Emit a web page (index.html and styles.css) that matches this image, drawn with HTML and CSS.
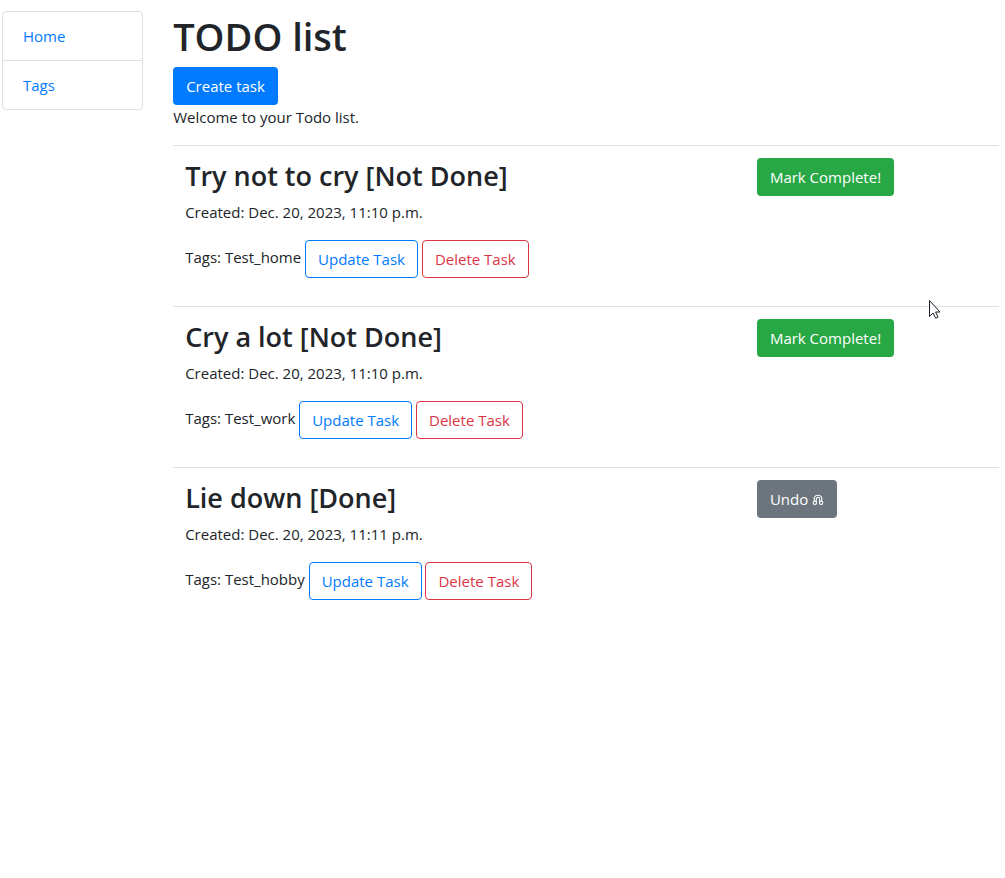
FILE: index.html
```html
<!DOCTYPE html>
<html lang="en">
<head>
<meta charset="utf-8">
<meta name="viewport" content="width=device-width, initial-scale=1">
<title>TODO list</title>
<link rel="stylesheet" href="styles.css">
</head>
<body>
<div class="layout">
  <nav class="sidebar">
    <a class="sidebar-link" href="#">Home</a>
    <a class="sidebar-link" href="#">Tags</a>
  </nav>
  <main class="content">
    <h1 class="title">TODO list</h1>
    <button class="btn btn-primary" type="button">Create task</button>
    <p class="welcome">Welcome to your Todo list.</p>
    <section class="task">
      <div class="task-info">
        <h2 class="task-title">Try not to cry [Not Done]</h2>
        <p class="task-line">Created: Dec. 20, 2023, 11:10 p.m.</p>
        <p class="task-line">Tags: Test_home <button class="btn btn-outline-primary" type="button">Update Task</button> <button class="btn btn-outline-danger" type="button">Delete Task</button></p>
      </div>
      <div class="task-status"><button class="btn btn-success" type="button">Mark Complete!</button></div>
    </section>
    <section class="task">
      <div class="task-info">
        <h2 class="task-title">Cry a lot [Not Done]</h2>
        <p class="task-line">Created: Dec. 20, 2023, 11:10 p.m.</p>
        <p class="task-line">Tags: Test_work <button class="btn btn-outline-primary" type="button">Update Task</button> <button class="btn btn-outline-danger" type="button">Delete Task</button></p>
      </div>
      <div class="task-status">
        <button class="btn btn-success" type="button">Mark Complete!</button>
        <svg class="pointer" width="13" height="20" viewBox="0 0 13 20" aria-hidden="true"><path d="M.5 .5v16l3.5-3.5 2.6 5.2 2.4-1.1-2.4-5.1h4.4z" fill="#fff" stroke="#1c1c28" stroke-width="1"/></svg>
      </div>
    </section>
    <section class="task">
      <div class="task-info">
        <h2 class="task-title">Lie down [Done]</h2>
        <p class="task-line">Created: Dec. 20, 2023, 11:11 p.m.</p>
        <p class="task-line">Tags: Test_hobby <button class="btn btn-outline-primary" type="button">Update Task</button> <button class="btn btn-outline-danger" type="button">Delete Task</button></p>
      </div>
      <div class="task-status"><button class="btn btn-secondary" type="button">Undo <svg class="undo-icon" width="12" height="12" viewBox="0 0 12 12" aria-hidden="true"><g fill="none" stroke="currentColor" stroke-width="1.1"><path d="M2.6 6.8C1.2 4 2.6 1.2 6 1.2S10.800 4 9.400 6.800M4.300 7.500V5.200C4.300 4 5 3.300 6 3.300S7.700 4 7.700 5.200V7.500"/><circle cx="2.900" cy="8.800" r="1.700"/><circle cx="9.100" cy="8.800" r="1.700"/></g></svg></button></div>
    </section>
  </main>
</div>
</body>
</html>
```
FILE: styles.css
```css
* { box-sizing: border-box; }

body {
  margin: 0;
  background: #fff;
  color: #212529;
  font: 400 15px/24px "Open Sans", "Noto Sans", sans-serif;
}

.layout {
  display: grid;
  grid-template-columns: minmax(0, 1fr) minmax(0, 5fr);
  padding: 11px 6px 0 2px;
}

.sidebar {
  align-self: start;
  margin-right: 25px;
  border: 1px solid #dfdfdf;
  border-radius: 4px;
}

.sidebar-link {
  display: block;
  padding: 12px 20px;
  color: #007bff;
  text-decoration: none;
}

.sidebar-link + .sidebar-link { border-top: 1px solid #dfdfdf; }

.content { padding-left: 5px; }

.title {
  margin: 0 0 6px;
  font-size: 38px;
  font-weight: 600;
  line-height: 50px;
}

.btn {
  height: 38px;
  padding: 0 12px;
  border: 1px solid transparent;
  border-radius: 4px;
  font: inherit;
  vertical-align: middle;
  cursor: pointer;
}

.btn-primary { background: #007bff; color: #fff; }
.btn-success { background: #28a745; color: #fff; }
.btn-secondary { background: #6c757d; color: #fff; }
.btn-outline-primary { background: #fff; border-color: #007bff; color: #007bff; }
.btn-outline-danger { background: #fff; border-color: #dc3545; color: #dc3545; }

.welcome { margin: 0 0 16px; }

.task {
  display: grid;
  grid-template-columns: minmax(0, 9fr) minmax(0, 4fr);
  border-top: 1px solid #dee2e6;
}

.task-info,
.task-status { padding: 12px; }

.task-status { position: relative; }

.task-title {
  margin: 0 0 6px;
  font-size: 27px;
  font-weight: 600;
  line-height: 36px;
}

.task-line { margin: 0 0 16px; }

.pointer {
  position: absolute;
  top: -7px;
  right: 57px;
}

.undo-icon { vertical-align: -1px; }
```
